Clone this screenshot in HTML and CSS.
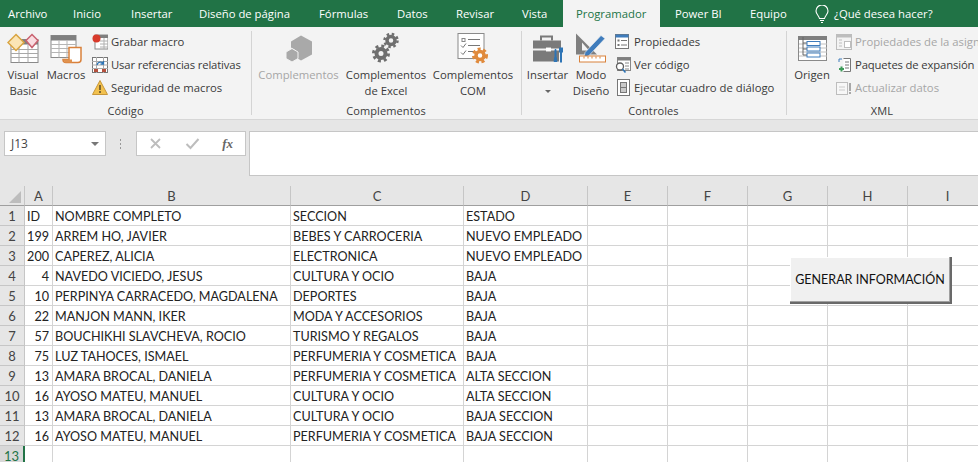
FILE: index.html
```html
<!DOCTYPE html>
<html lang="es">
<head>
<meta charset="utf-8">
<title>Excel - Programador</title>
<link rel="stylesheet" href="styles.css">
</head>
<body>
<nav class="tabs">
  <span class="tab t-archivo">Archivo</span>
  <span class="tab t-inicio">Inicio</span>
  <span class="tab t-insertar">Insertar</span>
  <span class="tab t-diseno">Diseño de página</span>
  <span class="tab t-formulas">Fórmulas</span>
  <span class="tab t-datos">Datos</span>
  <span class="tab t-revisar">Revisar</span>
  <span class="tab t-vista">Vista</span>
  <span class="tab t-prog active">Programador</span>
  <span class="tab t-power">Power BI</span>
  <span class="tab t-equipo">Equipo</span>
  <span class="tab t-search">
    <svg class="bulb" width="14" height="18" viewBox="0 0 14 18"><path d="M4.5 13.5C4 10.5 1 9.500 1 6a6 6 0 0 1 12 0c0 3.500-3 4.500-3.500 7.500zM5 15.500h4M6 17.500h2" fill="none" stroke="#fff" stroke-width="1.100"/></svg>
    ¿Qué desea hacer?
  </span>
</nav>

<section class="ribbon">
  <div class="group g-codigo">
    <div class="group-body">
      <div class="big b-vb">
        <svg class="big-icon" width="32" height="30" viewBox="0 0 32 30"><rect x="4" y="6" width="27" height="23" fill="#fff" stroke="#8a8a8a"/><rect x="4" y="6" width="27" height="5" fill="#7f7f7f"/><path d="M4 16h27M4 20h27M4 24h27M12 11v18M21 11v18" stroke="#a8a8a8"/><path d="M9 1l8 8-8 8-8-8z" fill="#fbe5b5" stroke="#d9a441" stroke-width="1.500"/><path d="M25 1l6 6-6 7-6-7z" fill="#f9dce0" stroke="#c9616f" stroke-width="1.500"/></svg>
        <span>Visual<br>Basic</span>
      </div>
      <div class="big b-macros">
        <svg class="big-icon" width="32" height="30" viewBox="0 0 32 30"><rect x="1" y="2" width="25" height="22" fill="#fff" stroke="#8a8a8a"/><rect x="1" y="2" width="25" height="5" fill="#7f7f7f"/><path d="M1 11h25M1 15h25M1 19h25M9 7v17M17 7v17" stroke="#b5b5b5"/><path d="M19 14h12v12c0 2-1 3-3 3H16c-2 0-3-1-3-3h6z" fill="#fff" stroke="#d9813b" stroke-width="1.500"/><path d="M13 26h9v3h-7z" fill="#e0924f"/></svg>
        <span>Macros</span>
      </div>
      <ul class="small-list l-codigo">
        <li><svg width="16" height="16" viewBox="0 0 16 16"><rect x="3" y="1" width="13" height="14" fill="#fff" stroke="#8a8a8a"/><rect x="3" y="1" width="13" height="3" fill="#7f7f7f"/><path d="M8 7h8M8 10h8M8 13h8M12 4v11" stroke="#b0b0b0"/><circle cx="4.500" cy="4.500" r="4" fill="#d83b2b"/></svg>Grabar macro</li>
        <li><svg width="16" height="16" viewBox="0 0 16 16"><rect x="0.500" y="0.500" width="15" height="15" fill="#fff" stroke="#777"/><path d="M0 4.500h16M0 8h16M0 11.500h16M4.500 0v16M11.500 0v16" stroke="#aaa"/><rect x="2" y="12" width="4" height="3" fill="#b5503c"/><rect x="10" y="12" width="4" height="3" fill="#b5503c"/><path d="M5 8a3.500 3.500 0 0 1 6.500-1M11.500 4v3H8.500" fill="none" stroke="#2e75b6" stroke-width="1.300"/></svg><span class="tight">Usar referencias relativas</span></li>
        <li><svg width="16" height="15" viewBox="0 0 16 15"><path d="M8 .5l7.500 14H.5z" fill="#f2c14e" stroke="#c8973a"/><path d="M8 5v5M8 11v2" stroke="#5a4a2a" stroke-width="1.500"/></svg>Seguridad de macros</li>
      </ul>
    </div>
    <div class="group-label">Código</div>
  </div>

  <div class="group g-compl">
    <div class="group-body">
      <div class="big b-c1 disabled">
        <svg class="big-icon" width="28" height="28" viewBox="0 0 28 28"><path d="M16 1l11 6v13l-11 6-5-3v-7l-5-3V7z" fill="#a9a9a9"/><path d="M7 14l6 3.500V24l-6 3.500L1 24v-6.500z" fill="#a9a9a9" stroke="#f3f3f3"/></svg>
        <span>Complementos</span>
      </div>
      <div class="big b-c2">
        <svg class="big-icon" width="28" height="30" viewBox="0 0 28 30"><g fill="none" stroke="#6f6f6f"><circle cx="19" cy="7" r="4" stroke-width="3.500"/><circle cx="19" cy="7" r="6.500" stroke-width="2.500" stroke-dasharray="2.500 2.600"/><circle cx="9" cy="20" r="4.500" stroke-width="4"/><circle cx="9" cy="20" r="7.500" stroke-width="3" stroke-dasharray="3 2.900"/></g></svg>
        <span>Complementos<br>de Excel</span>
      </div>
      <div class="big b-c3">
        <svg class="big-icon" width="32" height="32" viewBox="0 0 32 32"><rect x="1" y="1" width="26" height="25" fill="#fff" stroke="#8a8a8a"/><rect x="5" y="6" width="3" height="3" fill="none" stroke="#888"/><path d="M11 7h12M11 13h12M11 19h6M4 13l2 2 3-4M4 20l2 2 3-4" fill="none" stroke="#777"/><circle cx="23" cy="23" r="4" fill="none" stroke="#e08a3c" stroke-width="3.500"/><circle cx="23" cy="23" r="6.500" fill="none" stroke="#e08a3c" stroke-width="3" stroke-dasharray="3 2.500"/></svg>
        <span>Complementos<br>COM</span>
      </div>
    </div>
    <div class="group-label">Complementos</div>
  </div>

  <div class="group g-ctrl">
    <div class="group-body">
      <div class="big b-ins">
        <svg class="big-icon" width="32" height="30" viewBox="0 0 32 30"><path d="M9 7V3h11v4" fill="none" stroke="#7a7a7a" stroke-width="2"/><path d="M1 7h28v8H19v-1h-5v1H1z" fill="#7a7a7a"/><path d="M1 17h13v1h5v-1h8v11H1z" fill="#7a7a7a"/><rect x="14" y="14.500" width="5" height="3" fill="#fff"/><path d="M24 16v7l1 5h-3l1-5v-7z" fill="#2e75b6" stroke="#2e75b6"/><path d="M28 14v4h2v-4M29 18v11" fill="none" stroke="#2e75b6" stroke-width="2"/></svg>
        <span>Insertar</span>
        <i class="caret"></i>
      </div>
      <div class="big b-modo">
        <svg class="big-icon" width="32" height="32" viewBox="0 0 32 32"><path d="M1 1l21 21H1z" fill="#7f7f7f"/><path d="M7 10l7 8H7z" fill="#f3f3f3"/><path d="M10 20L26 3l4 3-16 17-5 2z" fill="#3f7cbc" stroke="#f3f3f3" stroke-width=".6"/><rect x="4.500" y="23.500" width="26" height="6" fill="#fff" stroke="#d9813b"/><path d="M9 24v2M13 24v2M17 24v2M21 24v2M25 24v2" stroke="#d9813b"/></svg>
        <span>Modo<br>Diseño</span>
      </div>
      <ul class="small-list l-ctrl">
        <li><svg width="16" height="16" viewBox="0 0 16 16"><rect x=".5" y=".5" width="13" height="14" fill="#fff" stroke="#777"/><rect x=".5" y=".5" width="13" height="3" fill="#3f7cbc"/><path d="M6 6.500h6M6 11h6" stroke="#777"/><rect x="2.500" y="5.500" width="2" height="2" fill="#777"/><rect x="2.500" y="10" width="2" height="2" fill="#777"/></svg>Propiedades</li>
        <li><svg width="16" height="16" viewBox="0 0 16 16"><rect x="2.500" y=".5" width="13" height="13" fill="#fff" stroke="#888"/><rect x="2.500" y=".5" width="13" height="3" fill="#7f7f7f"/><path d="M10 6h4M10 9h4M10 12h4" stroke="#888"/><circle cx="5" cy="9.500" r="3.500" fill="#fff" stroke="#5f5f5f" stroke-width="1.300"/><path d="M7.500 12l3 3.500" stroke="#2e75b6" stroke-width="1.600"/></svg>Ver código</li>
        <li><svg width="16" height="17" viewBox="0 0 16 17"><rect x="2.500" y=".5" width="12" height="16" fill="#fff" stroke="#777"/><rect x="5.500" y="3.500" width="6" height="10" fill="#c9c9c9" stroke="#777"/><path d="M5.500 8.500h6" stroke="#777"/></svg>Ejecutar cuadro de diálogo</li>
      </ul>
    </div>
    <div class="group-label">Controles</div>
  </div>

  <div class="group g-xml">
    <div class="group-body">
      <div class="big b-orig">
        <svg class="big-icon" width="29" height="25" viewBox="0 0 29 25"><rect x=".5" y=".5" width="28" height="24" fill="#fff" stroke="#8a8a8a"/><rect x="0" y="0" width="29" height="4" fill="#7f7f7f"/><path d="M1 8h28M1 12h28M1 16h28M1 20h28" stroke="#c0c0c0"/><path d="M5 1v18M5 7h4M5 13h4M5 19h4" fill="none" stroke="#666"/><rect x="9" y="5.500" width="13" height="4" fill="#fff" stroke="#3f7cbc"/><rect x="9" y="11" width="13" height="4" fill="#fff" stroke="#3f7cbc"/><rect x="9" y="17" width="13" height="4" fill="#fff" stroke="#3f7cbc"/></svg>
        <span>Origen</span>
      </div>
      <ul class="small-list l-xml">
        <li class="disabled"><svg width="16" height="16" viewBox="0 0 16 16"><rect x=".5" y=".5" width="15" height="15" fill="#f3f3f3" stroke="#bdbdbd"/><rect x=".5" y=".5" width="15" height="3" fill="#bdbdbd"/><path d="M3 6h3M3 9h3M3 12h3" stroke="#bdbdbd"/><rect x="8.500" y="7.500" width="6" height="6" fill="#fff" stroke="#bdbdbd"/></svg>Propiedades de la asignación</li>
        <li><svg width="16" height="16" viewBox="0 0 16 16"><path d="M7.500 1.500h7v13h-7" fill="#fff" stroke="#777"/><path d="M9 5h4M9 8h4M9 11h4" stroke="#777"/><path d="M3 2h3M3 2v3" stroke="#3f7cbc"/><path d="M3 12h5M5.500 9.500v5" stroke="#3f9c5a" stroke-width="2"/></svg><span class="tight">Paquetes de expansión</span></li>
        <li class="disabled"><svg width="16" height="16" viewBox="0 0 16 16"><rect x=".5" y="2.500" width="11" height="12" fill="#f7f7f7" stroke="#bdbdbd"/><path d="M3 7h6M3 10h6" stroke="#cbcbcb"/><path d="M14 3v8M14 12v2" stroke="#a8a8a8" stroke-width="2"/></svg>Actualizar datos</li>
      </ul>
    </div>
    <div class="group-label">XML</div>
  </div>
</section>

<section class="formula">
  <div class="namebox"><span>J13</span><i class="caret dark"></i></div>
  <div class="grip"></div>
  <div class="fx-box">
    <svg width="13" height="13" viewBox="0 0 13 13"><path d="M2 2l9 9M11 2l-9 9" stroke="#bdbdbd" stroke-width="1.800"/></svg>
    <svg width="15" height="13" viewBox="0 0 15 13"><path d="M1.500 7l4 4 8-9" fill="none" stroke="#bdbdbd" stroke-width="2"/></svg>
    <em>fx</em>
  </div>
  <div class="fx-input"></div>
</section>

<section class="sheet">
  <table>
    <colgroup>
      <col class="c-h"><col class="c-a"><col class="c-b"><col class="c-c"><col class="c-d"><col class="c-n"><col class="c-n"><col class="c-n"><col class="c-n"><col class="c-n">
    </colgroup>
    <thead>
      <tr><th class="corner"><i></i></th><th>A</th><th>B</th><th>C</th><th>D</th><th>E</th><th>F</th><th>G</th><th>H</th><th>I</th></tr>
    </thead>
    <tbody>
      <tr><th>1</th><td>ID</td><td>NOMBRE COMPLETO</td><td>SECCION</td><td>ESTADO</td><td></td><td></td><td></td><td></td><td></td></tr>
      <tr><th>2</th><td class="num">199</td><td>ARREM HO, JAVIER</td><td>BEBES Y CARROCERIA</td><td>NUEVO EMPLEADO</td><td></td><td></td><td></td><td></td><td></td></tr>
      <tr><th>3</th><td class="num">200</td><td>CAPEREZ, ALICIA</td><td>ELECTRONICA</td><td>NUEVO EMPLEADO</td><td></td><td></td><td></td><td></td><td></td></tr>
      <tr><th>4</th><td class="num">4</td><td>NAVEDO VICIEDO, JESUS</td><td>CULTURA Y OCIO</td><td>BAJA</td><td></td><td></td><td></td><td></td><td></td></tr>
      <tr><th>5</th><td class="num">10</td><td>PERPINYA CARRACEDO, MAGDALENA</td><td>DEPORTES</td><td>BAJA</td><td></td><td></td><td></td><td></td><td></td></tr>
      <tr><th>6</th><td class="num">22</td><td>MANJON MANN, IKER</td><td>MODA Y ACCESORIOS</td><td>BAJA</td><td></td><td></td><td></td><td></td><td></td></tr>
      <tr><th>7</th><td class="num">57</td><td>BOUCHIKHI SLAVCHEVA, ROCIO</td><td>TURISMO Y REGALOS</td><td>BAJA</td><td></td><td></td><td></td><td></td><td></td></tr>
      <tr><th>8</th><td class="num">75</td><td>LUZ TAHOCES, ISMAEL</td><td>PERFUMERIA Y COSMETICA</td><td>BAJA</td><td></td><td></td><td></td><td></td><td></td></tr>
      <tr><th>9</th><td class="num">13</td><td>AMARA BROCAL, DANIELA</td><td>PERFUMERIA Y COSMETICA</td><td>ALTA SECCION</td><td></td><td></td><td></td><td></td><td></td></tr>
      <tr><th>10</th><td class="num">16</td><td>AYOSO MATEU, MANUEL</td><td>CULTURA Y OCIO</td><td>ALTA SECCION</td><td></td><td></td><td></td><td></td><td></td></tr>
      <tr><th>11</th><td class="num">13</td><td>AMARA BROCAL, DANIELA</td><td>CULTURA Y OCIO</td><td>BAJA SECCION</td><td></td><td></td><td></td><td></td><td></td></tr>
      <tr><th>12</th><td class="num">16</td><td>AYOSO MATEU, MANUEL</td><td>PERFUMERIA Y COSMETICA</td><td>BAJA SECCION</td><td></td><td></td><td></td><td></td><td></td></tr>
      <tr class="current"><th>13</th><td></td><td></td><td></td><td></td><td></td><td></td><td></td><td></td><td></td></tr>
    </tbody>
  </table>
  <button class="macro-btn">GENERAR INFORMACIÓN</button>
</section>
</body>
</html>
```
FILE: styles.css
```css
* { box-sizing: border-box; }
html, body { margin: 0; height: 100%; }
body {
  width: 978px;
  height: 462px;
  overflow: hidden;
  background: #e6e6e6;
  font-family: "Open Sans", "Noto Sans", sans-serif;
  color: #333;
}

/* Tabs */
.tabs {
  height: 27px;
  background: #217346;
  display: grid;
  grid-template-columns: 65px 58px 68px 120px 78px 59px 66px 49px 97px 75px 65px 1fr;
  font-size: 11.3px;
  color: #fff;
}
.tab { display: flex; align-items: center; padding-left: 8px; white-space: nowrap; }
.t-prog { padding-left: 13px; }
.t-power { padding-left: 15px; }
.t-equipo { padding-left: 15px; }
.t-search { padding-left: 15px; gap: 5px; }
.active { background: #f3f3f3; color: #217346; }

/* Ribbon */
.ribbon {
  height: 93px;
  display: flex;
  background: #f3f3f3;
  border-bottom: 1px solid #d6d6d6;
  font-size: 11.3px;
  color: #3a3a3a;
}
.group {
  display: flex;
  flex-direction: column;
  padding-top: 3px;
  position: relative;
}
.group + .group::before {
  content: "";
  position: absolute;
  left: 0;
  top: 4px;
  bottom: 4px;
  width: 1px;
  background: #d4d4d4;
}
.group-body { display: flex; flex: 1; min-height: 0; }
.group-label { height: 16px; line-height: 16px; text-align: center; font-size: 11px; letter-spacing: .1px; }
.g-codigo { width: 251px; }
.g-compl { width: 270px; }
.g-ctrl { width: 265px; }
.g-xml { width: 192px; }
.big {
  display: flex;
  flex-direction: column;
  align-items: center;
  text-align: center;
  line-height: 16px;
  white-space: nowrap;
  flex: none;
}
.big-icon { height: 37px; flex: none; }
.disabled { color: #a6a6a6; }
.b-vb { width: 46px; }
.b-macros { width: 40px; }
.b-c1 { width: 89px; margin-left: 3px; }
.b-c2 { width: 86px; }
.b-c3 { width: 88px; }
.b-ins { width: 53px; }
.b-modo { width: 34px; }
.b-orig { width: 42px; margin-left: 5px; }

.small-list {
  list-style: none;
  margin: 0;
  padding: 0;
  flex: none;
  white-space: nowrap;
}
.small-list li {
  height: 23px;
  display: flex;
  align-items: center;
  gap: 3px;
}
.small-list svg { flex: none; }
.tight { letter-spacing: -.15px; }
.l-codigo { margin-left: 6px; }
.l-ctrl { margin-left: 7px; }
.l-xml { margin-left: 3px; }

.caret {
  width: 0;
  height: 0;
  border: 3px solid transparent;
  border-top: 3px solid #666;
  border-bottom: 0;
  margin-top: 7px;
}

/* Formula bar */
.formula {
  height: 66px;
  display: flex;
  align-items: flex-start;
  padding: 11px 0 0 4px;
  background: #e6e6e6;
}
.namebox {
  width: 102px;
  height: 25px;
  background: #fff;
  border: 1px solid #c6c6c6;
  display: flex;
  align-items: center;
  justify-content: space-between;
  padding: 0 6px 0 6px;
  font-size: 12px;
  color: #444;
}
.caret.dark { border-width: 4px 4px 0; border-top-color: #777; margin: 0; }
.grip {
  width: 3px;
  height: 11px;
  margin: 7px 14px 0 13px;
  background-image: radial-gradient(circle, #999 1px, transparent 1px);
  background-size: 3px 4px;
}
.fx-box {
  width: 110px;
  height: 25px;
  background: #fff;
  border: 1px solid #c6c6c6;
  display: flex;
  align-items: center;
  justify-content: space-between;
  padding: 0 12px 0 12px;
  margin-right: 3px;
}
.fx-box em {
  font-family: "Liberation Serif", serif;
  font-size: 13px;
  font-weight: bold;
  color: #666;
}
.fx-input {
  flex: 1;
  height: 45px;
  background: #fff;
  border: 1px solid #c6c6c6;
  border-right: 0;
}

/* Sheet */
.sheet { position: relative; height: 276px; overflow: hidden; }
table {
  border-collapse: separate;
  border-spacing: 0;
  table-layout: fixed;
  width: 988px;
  font-family: Lato, "Liberation Sans", sans-serif;
  font-size: 12.6px;
  color: #222;
}
.c-h { width: 25px; }
.c-a { width: 28px; }
.c-b { width: 238px; }
.c-c { width: 173px; }
.c-d { width: 124px; }
.c-n { width: 80px; }
tr { height: 20px; }
th {
  background: #e6e6e6;
  font-weight: normal;
  font-family: Lato, "Open Sans", sans-serif;
  font-size: 13px;
  color: #444;
  padding: 0;
  text-align: center;
  border-right: 1px solid #c6c6c6;
  border-bottom: 1px solid #c6c6c6;
  overflow: hidden;
}
thead th { border-bottom: 1px solid #9f9f9f; border-right: 1px solid #c6c6c6; }
td {
  background: #fff;
  padding: 1px 2px 0 2px;
  border-right: 1px solid #d4d4d4;
  border-bottom: 1px solid #d4d4d4;
  white-space: nowrap;
  overflow: hidden;
}
td.num { text-align: right; padding-right: 3px; }
.corner { position: relative; }
.corner i {
  position: absolute;
  right: 3px;
  bottom: 2px;
  width: 0;
  height: 0;
  border-style: solid;
  border-width: 0 0 12px 12px;
  border-color: transparent transparent #bdbdbd transparent;
}
.current th { color: #217346; border-right: 2px solid #217346; border-bottom: 0; background: #d8d8d8; }
.macro-btn {
  position: absolute;
  left: 790px;
  top: 71px;
  width: 162px;
  height: 47px;
  background: #f0f0f0;
  border: 0;
  border-right: 2px solid #696969;
  border-bottom: 2px solid #696969;
  box-shadow: inset -1px -1px 0 #a0a0a0, inset 1px 1px 0 #fff;
  font-family: Lato, "Liberation Sans", sans-serif;
  font-size: 12.5px;
  color: #111;
  padding: 0;
  white-space: nowrap;
}
```
